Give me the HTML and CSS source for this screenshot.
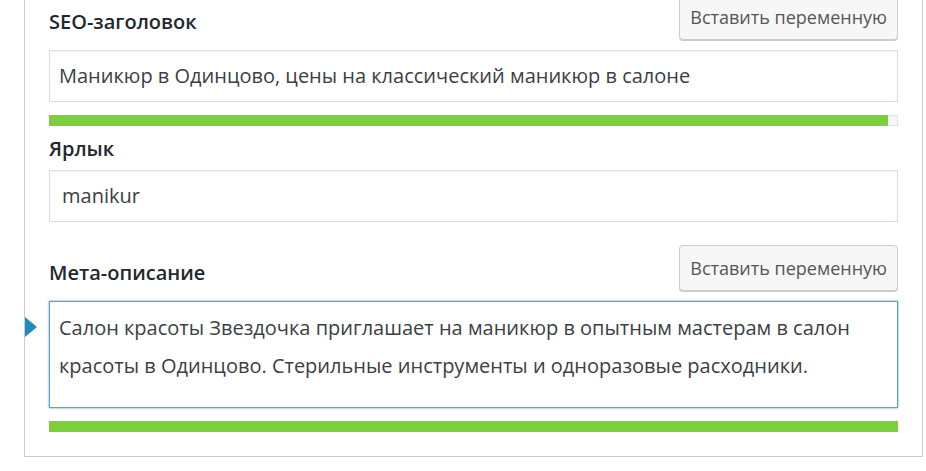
FILE: index.html
```html
<!DOCTYPE html>
<html lang="ru">
<head>
<meta charset="UTF-8">
<title>SEO</title>
<link rel="stylesheet" href="styles.css">
</head>
<body>

<div class="panel">
  <div class="field-head">
    <label class="field-label" for="seo-title">SEO-заголовок</label>
    <button class="var-button">Вставить переменную</button>
  </div>
  <div class="field-box" id="seo-title">Маникюр в Одинцово, цены на классический маникюр в салоне</div>
  <div class="progress"><div class="progress-fill" style="width: 98.8%;"></div></div>

  <div class="field-head">
    <label class="field-label" for="slug">Ярлык</label>
  </div>
  <div class="field-box slug" id="slug">manikur</div>

  <div class="field-head meta">
    <label class="field-label" for="meta-desc">Мета-описание</label>
    <button class="var-button">Вставить переменную</button>
  </div>
  <div class="field-wrap">
    <span class="marker"></span>
    <div class="field-box area" id="meta-desc">Салон красоты Звездочка приглашает на маникюр в опытным мастерам в салон красоты в Одинцово. Стерильные инструменты и одноразовые расходники.</div>
  </div>
  <div class="progress"><div class="progress-fill" style="width: 100%;"></div></div>
</div>

</body>
</html>
```

FILE: styles.css
```css
body {
  margin: 0;
  background: #fff;
  font-family: "Open Sans", "Noto Sans", sans-serif;
  color: #3c4043;
  overflow: hidden;
}
.panel {
  margin: -6px 0 0 24px;
  width: 849px;
  padding: 0 24px 24px;
  border-left: 1px solid #ccc;
  border-right: 1px solid #ccc;
  border-bottom: 1px solid #ccc;
}
.field-head {
  display: flex;
  justify-content: space-between;
  align-items: center;
}
.field-label {
  font-size: 20px;
  font-weight: 600;
  color: #23282d;
  padding-top: 9px;
}
.var-button {
  font-family: inherit;
  font-size: 18px;
  color: #555;
  background: #f7f7f7;
  border: 1px solid #ccc;
  border-radius: 4px;
  box-shadow: 0 1px 0 #ccc;
  height: 46px;
  padding: 0 10px;
}
.field-box {
  border: 1px solid #ddd;
  height: 50px;
  padding: 0 9px;
  font-size: 20px;
  line-height: 50px;
  margin-top: 10px;
  box-shadow: inset 0 1px 2px rgba(0, 0, 0, 0.04);
}
.field-box.slug {
  padding-left: 12px;
  margin-top: 8px;
}
.field-wrap {
  position: relative;
}
.field-box.area {
  height: auto;
  line-height: 38px;
  padding: 7px 9px 22px;
  border-color: #5b9dd9;
  box-shadow: 0 0 2px rgba(30, 140, 190, 0.8);
}
.marker {
  position: absolute;
  left: -24px;
  top: 16px;
  border-top: 10px solid transparent;
  border-bottom: 10px solid transparent;
  border-left: 12px solid #1e8cbe;
}
.progress {
  height: 11px;
  margin-top: 13px;
  background: #f7f7f7;
  box-shadow: inset 0 0 0 1px #e2e2e2;
}
.progress-fill {
  height: 100%;
  background: #7ad03a;
}
.field-head.meta {
  margin-top: 23px;
}
```
